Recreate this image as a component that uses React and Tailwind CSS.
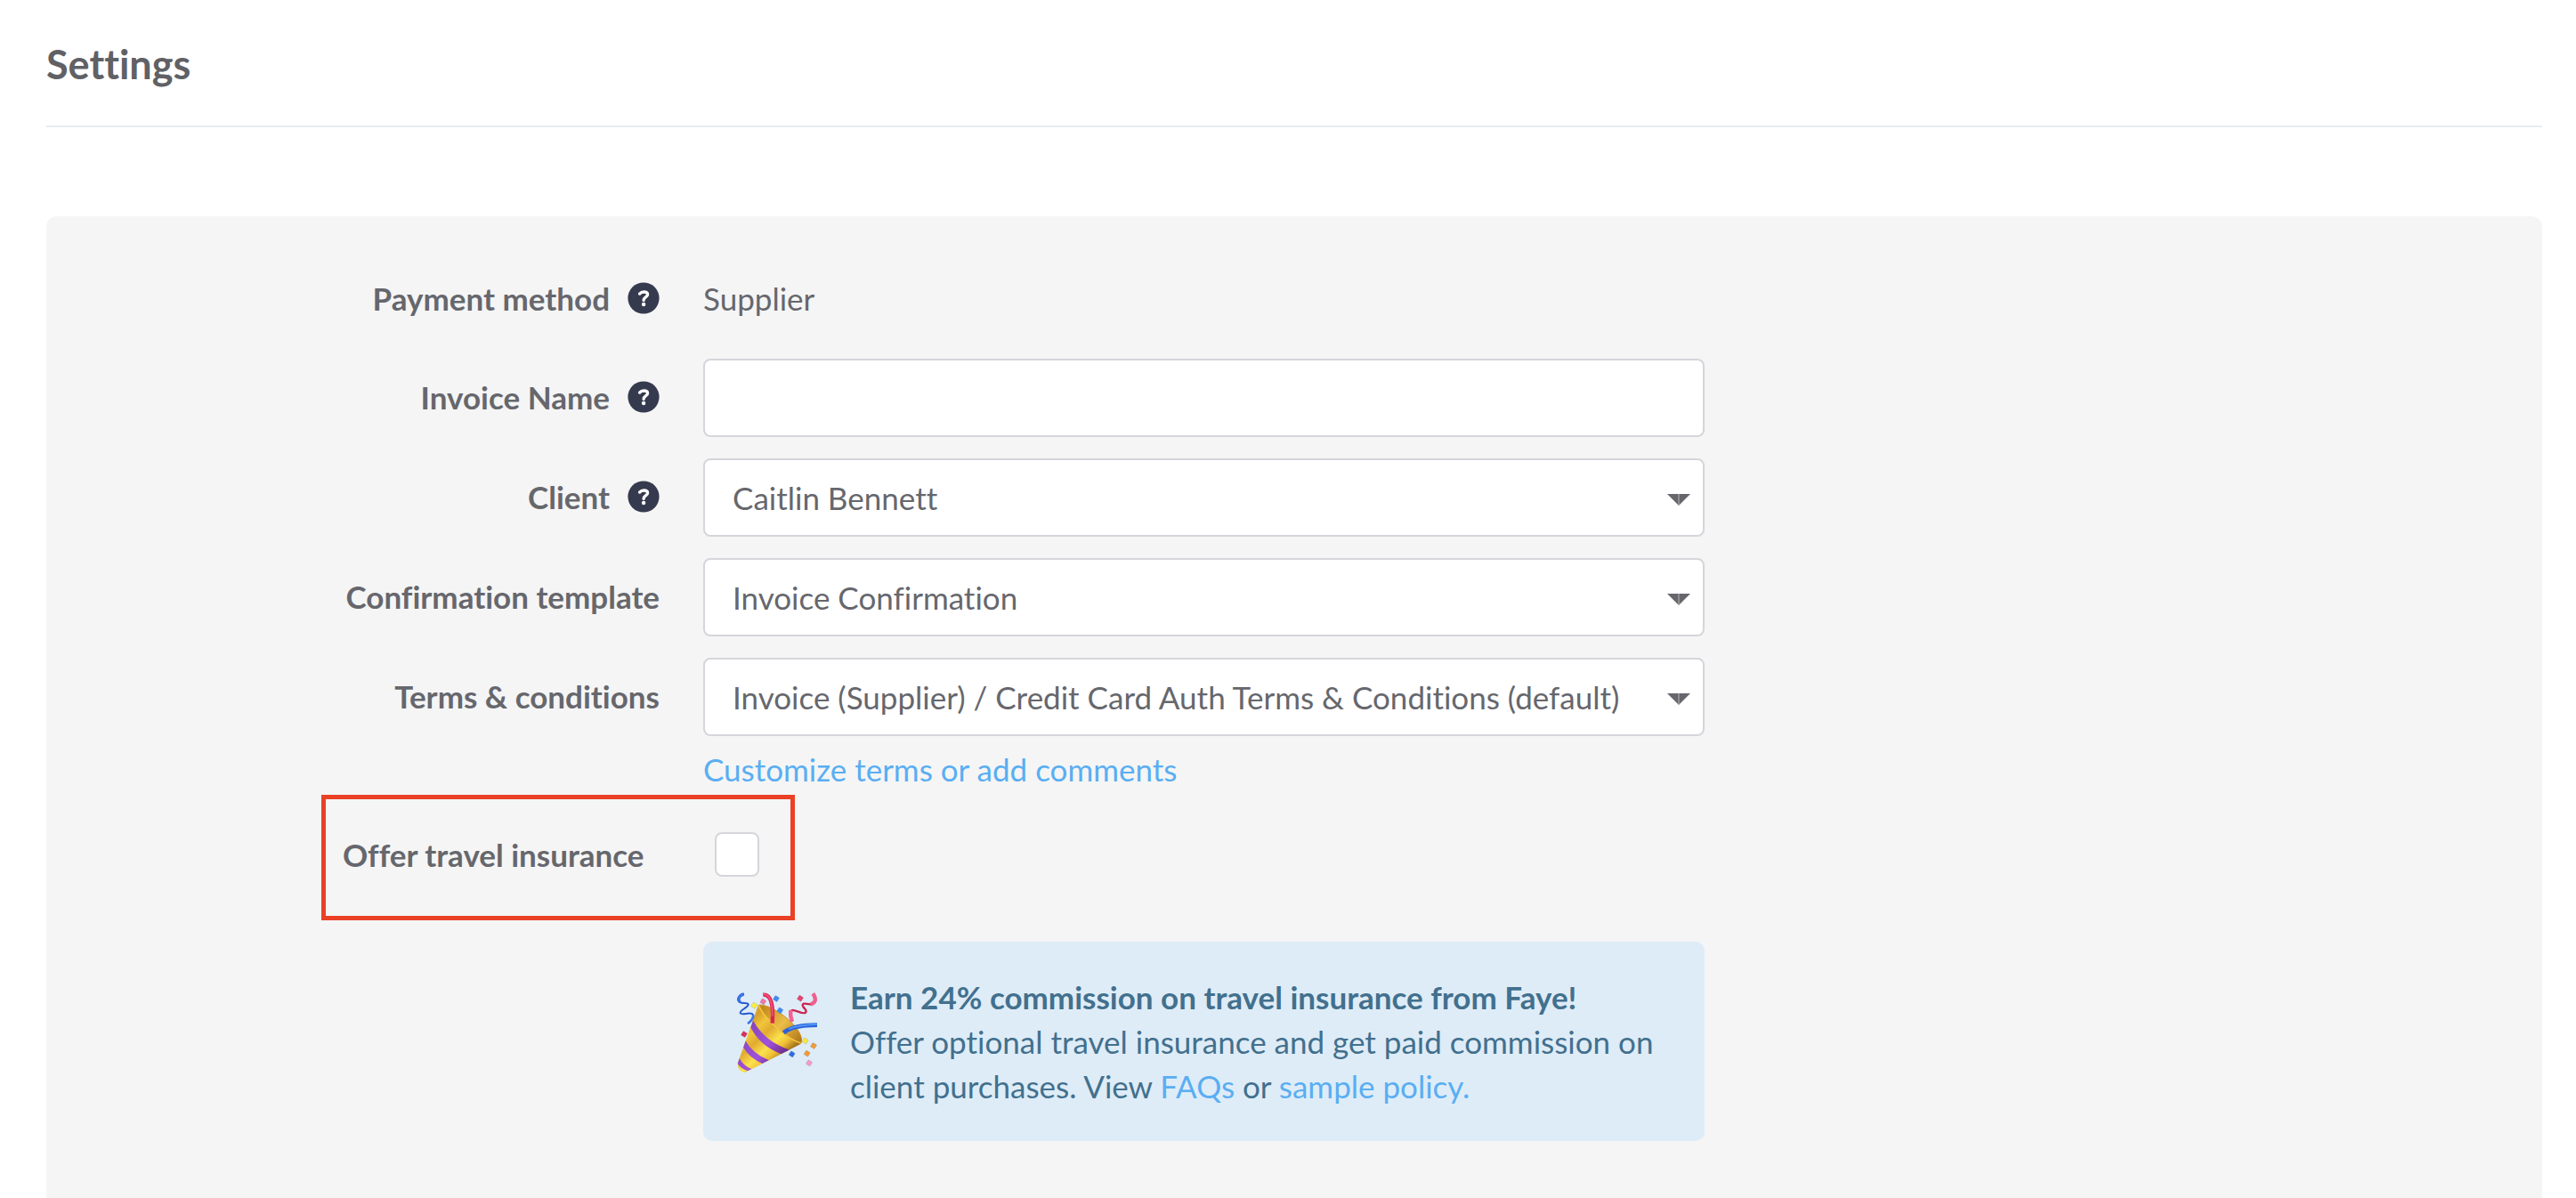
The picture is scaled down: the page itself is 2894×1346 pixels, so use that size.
import React, { useState } from 'react';

const HelpButton = ({ label }) => (
  <button type="button" aria-label={label} className="ml-5 h-[36px] w-[36px] flex-shrink-0 rounded-full">
    <svg viewBox="0 0 36 36" className="h-full w-full" aria-hidden="true">
      <circle cx="18" cy="18" r="17.6" fill="#363a4e" />
      <path
        d="M13.6 13.1C14.9 11.5 16.4 11 18.4 11C21 11 22.6 12.2 22.6 14C22.6 16.6 18.1 16.8 18.1 20.4"
        fill="none"
        stroke="#fff"
        strokeWidth="3.3"
        strokeLinecap="round"
        strokeLinejoin="round"
      />
      <circle cx="18.1" cy="25" r="2.2" fill="#fff" />
    </svg>
  </button>
);

// Label on the left, control on the right
const Row = ({ label, htmlFor, help, children }) => (
  <div className="grid grid-cols-[738fr_1125fr_941fr]">
    <div className="flex items-center justify-end pr-[49px] pb-0.5">
      <label htmlFor={htmlFor} className="font-bold">{label}</label>
      {help && <HelpButton label={help} />}
    </div>
    <div>{children}</div>
  </div>
);

const SelectField = ({ id, options }) => {
  const [value, setValue] = useState(options[0]);

  return (
    <div className="relative">
      <select
        id={id}
        value={value}
        onChange={(e) => setValue(e.target.value)}
        className="block h-[88px] w-full appearance-none rounded-lg border-2 border-[#d5d5db] bg-white pr-[60px] pl-[31px]"
      >
        {options.map((option) => (
          <option key={option}>{option}</option>
        ))}
      </select>
      <svg viewBox="0 0 26 13" className="pointer-events-none absolute top-[40px] right-4 h-[13px] w-[26px]" aria-hidden="true">
        <path d="M0 0H26L13 13Z" fill="#66676d" />
        <path d="M13 0V13" stroke="#b4b5b8" strokeWidth="1" />
      </svg>
    </div>
  );
};

const confetti = [
  { x: 58, y: 44, color: '#fdf03a' },
  { x: 88, y: 31, color: '#f673a5' },
  { x: 132, y: 21, color: '#3c8cf5' },
  { x: 145, y: 61, color: '#3c8cf5' },
  { x: 213, y: 20, color: '#e8426e' },
  { x: 24, y: 141, color: '#d92f56' },
  { x: 230, y: 163, color: '#fbe83a' },
  { x: 258, y: 180, color: '#f39a35' },
  { x: 236, y: 206, color: '#f39a35' },
  { x: 185, y: 208, color: '#2f6be0' },
  { x: 243, y: 238, color: '#f79ac8' },
];

const PartyPopper = () => (
  <svg viewBox="0 0 270 270" className="mt-[20px] h-[90px] w-[90px] flex-shrink-0" role="img" aria-label="Party popper">
    <defs>
      <linearGradient id="cone" x1="30" y1="110" x2="140" y2="230" gradientUnits="userSpaceOnUse">
        <stop offset="0" stopColor="#d9a02a" />
        <stop offset="0.2" stopColor="#f0c63a" />
        <stop offset="0.4" stopColor="#e2ab30" />
        <stop offset="0.65" stopColor="#fbe24c" />
        <stop offset="0.82" stopColor="#f0bf35" />
        <stop offset="1" stopColor="#a8741c" />
      </linearGradient>
      <linearGradient id="inside" x1="85" y1="55" x2="210" y2="165" gradientUnits="userSpaceOnUse">
        <stop offset="0" stopColor="#c58a1c" />
        <stop offset="0.5" stopColor="#ecbd48" />
        <stop offset="1" stopColor="#b37a1a" />
      </linearGradient>
      <linearGradient id="stripe" x1="30" y1="110" x2="160" y2="210" gradientUnits="userSpaceOnUse">
        <stop offset="0" stopColor="#8444b8" />
        <stop offset="0.6" stopColor="#a052dc" />
        <stop offset="1" stopColor="#6a2a86" />
      </linearGradient>
      <clipPath id="coneShape">
        <path d="M72 42L2 240Q2 266 27 270L216 173C222 160 90 36 72 42Z" />
      </clipPath>
    </defs>

    {/* cone and its opening */}
    <path d="M72 42L2 240Q2 266 27 270L216 173C222 160 90 36 72 42Z" fill="url(#cone)" />
    <g clipPath="url(#coneShape)" fill="url(#stripe)">
      <path d="M54 94Q92 166 178 194L150 208Q78 182 46 118Z" />
      <path d="M28 162Q52 206 108 229L86 240Q42 222 20 184Z" />
      <path d="M8 221Q20 246 50 259L36 265Q12 256 0 238Z" />
    </g>
    <path d="M73 43C96 38 150 66 188 106C214 134 222 158 216 171C196 166 160 144 134 120C104 92 80 64 73 43Z" fill="url(#inside)" />
    <path d="M73 43C80 64 104 92 134 120C160 144 196 166 216 171" fill="none" stroke="#f3c542" strokeWidth="5" />
    <path d="M73 43C96 38 150 66 188 106C214 134 222 158 216 171" fill="none" stroke="#c99022" strokeWidth="3" />

    {/* ribbons */}
    <g fill="none" strokeLinejoin="round">
      <path d="M24 5C5 10-2 24 8 32C18 40 34 32 38 40C40 50 8 60 11 70C16 80 48 62 54 76C58 88 44 98 36 105" stroke="#2458cf" strokeWidth="6" />
      <path d="M23 6C8 9 1 22 10 33" stroke="#3973e6" strokeWidth="10" />
      <path d="M54 76C57 88 48 96 38 104" stroke="#3f7bea" strokeWidth="8" />
      <path d="M88 8C116 6 123 45 119 104" stroke="#d92453" strokeWidth="13" />
      <path d="M88 6C110 6 120 32 119 80" stroke="#f44f77" strokeWidth="6" />
      <path d="M157 136C184 114 225 111 270 110" stroke="#2a62d8" strokeWidth="14" />
      <path d="M175 123C198 112 230 109 270 107" stroke="#4f92f7" strokeWidth="6" />
      <path d="M258 4C270 24 266 37 250 40C236 42 222 32 221 43C222 54 239 58 231 68C220 78 186 48 181 66C178 76 182 88 187 98" stroke="#c92650" strokeWidth="7" />
      <path d="M256 4C269 23 264 36 248 40" stroke="#f15f8e" strokeWidth="13" />
      <path d="M186 98C180 84 179 74 181 60" stroke="#f0648f" strokeWidth="13" />
    </g>

    {confetti.map(({ x, y, color }) => (
      <rect
        key={`${x}-${y}`}
        x={x - 8}
        y={y - 8}
        width="16"
        height="16"
        rx="2"
        fill={color}
        stroke="#7a7f94"
        strokeOpacity="0.5"
        strokeWidth="1.5"
        transform={`rotate(32 ${x} ${y})`}
      />
    ))}
  </svg>
);

const App = () => {
  const [invoiceName, setInvoiceName] = useState('');
  const [offerInsurance, setOfferInsurance] = useState(false);

  return (
    <div className="flex min-h-screen flex-col bg-white pr-[38px] pl-[52px] font-['Lato',sans-serif] text-[35px] leading-[50px] text-[#66676d] [font-variant-ligatures:none]">
      <header className="border-b-2 border-[#e7ebee] pt-[44px] pb-[41px]">
        <h1 className="text-[45px] leading-[56px] font-bold text-[#606165]">Settings</h1>
      </header>

      <main className="mt-[100px] flex-1 rounded-t-xl bg-[#f5f5f5] pt-[67px] pb-[60px]">
        <form onSubmit={(e) => e.preventDefault()}>
          <div className="mb-[41px]">
            <Row label="Payment method" htmlFor="payment-method" help="About payment method">
              <output id="payment-method" className="block">Supplier</output>
            </Row>
          </div>

          <div className="flex flex-col gap-6">
            <Row label="Invoice Name" htmlFor="invoice-name" help="About invoice name">
              <input
                id="invoice-name"
                type="text"
                value={invoiceName}
                onChange={(e) => setInvoiceName(e.target.value)}
                className="block h-[88px] w-full rounded-lg border-2 border-[#d5d5db] bg-white px-[31px]"
              />
            </Row>
            <Row label="Client" htmlFor="client" help="About client">
              <SelectField id="client" options={['Caitlin Bennett']} />
            </Row>
            <Row label="Confirmation template" htmlFor="template">
              <SelectField id="template" options={['Invoice Confirmation']} />
            </Row>
            <Row label="Terms & conditions" htmlFor="terms">
              <SelectField
                id="terms"
                options={['Invoice (Supplier) / Credit Card Auth Terms & Conditions (default)']}
              />
            </Row>
          </div>

          <div className="mt-3 grid grid-cols-[738fr_1125fr_941fr]">
            <div className="col-start-2">
              <a href="#terms" className="text-[#5aaef2]">Customize terms or add comments</a>
            </div>
          </div>

          {/* Highlighted option */}
          <div className="mt-1 grid grid-cols-[309fr_532fr_1963fr]">
            <div className="col-start-2 flex h-[141px] items-center justify-between border-[5px] border-[#ea4126] pr-[35px] pb-2 pl-[19px]">
              <label htmlFor="offer-insurance" className="font-bold whitespace-nowrap">
                Offer travel insurance
              </label>
              <input
                id="offer-insurance"
                type="checkbox"
                checked={offerInsurance}
                onChange={(e) => setOfferInsurance(e.target.checked)}
                className="h-[50px] w-[50px] appearance-none rounded-lg border-2 border-[#d5d5db] bg-white checked:bg-[#5aaef2]"
              />
            </div>
          </div>

          <div className="mt-6 grid grid-cols-[738fr_1125fr_941fr]">
            <div className="col-start-2 flex gap-[37px] rounded-[10px] bg-[#deecf7] px-[38px] py-[37px] text-[#42708e]">
              <PartyPopper />
              <div>
                <strong className="block font-bold">Earn 24% commission on travel insurance from Faye!</strong>
                <p>
                  Offer optional travel insurance and get paid commission on client purchases. View{' '}
                  <a href="#faqs" className="text-[#5aaef2]">FAQs</a> or{' '}
                  <a href="#policy" className="text-[#5aaef2]">sample policy.</a>
                </p>
              </div>
            </div>
          </div>
        </form>
      </main>
    </div>
  );
};

export default App;
